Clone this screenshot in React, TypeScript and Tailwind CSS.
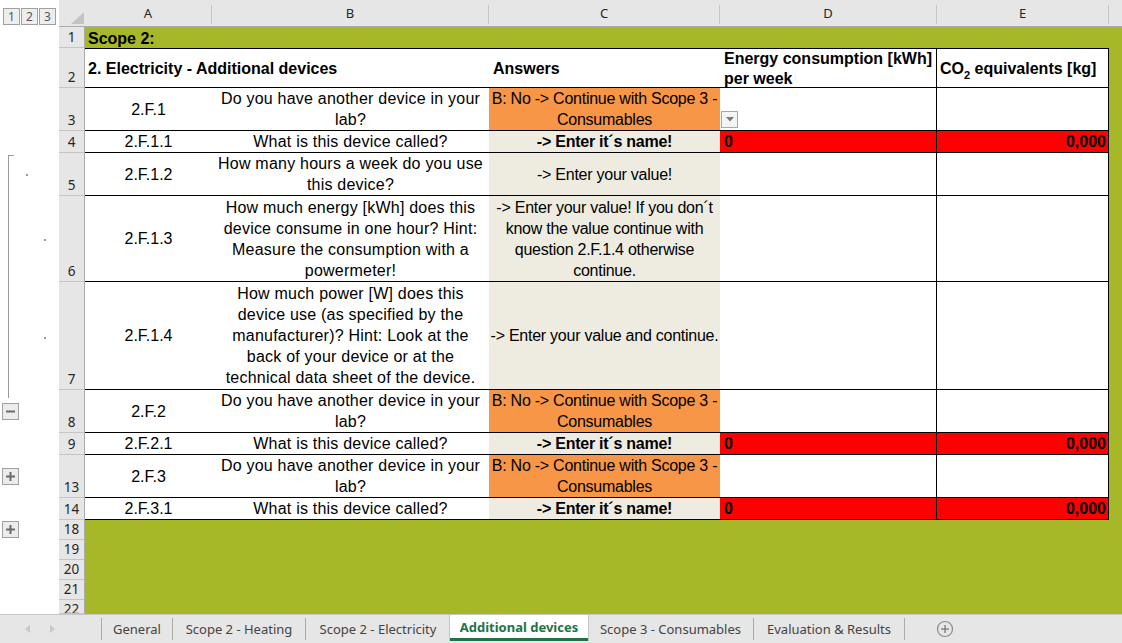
import React, { ReactNode } from 'react';

const GREEN = 'bg-[#a6b828]';

// outline gutter pieces (left of the row headers)
function OutlineBox({ sign }: { sign: '+' | '-' | string }) {
  return (
    <div className="w-[17px] h-[17px] border border-[#a0a0a0] bg-[#ececec] flex items-center justify-center">
      <svg width="9" height="9" viewBox="0 0 9 9">
        <rect x="0" y="3.5" width="9" height="2" fill="#6b6b6b" />
        {sign === '+' && <rect x="3.5" y="0" width="2" height="9" fill="#6b6b6b" />}
      </svg>
    </div>
  );
}

function Dot({ x, y }: { x: string; y: string }) {
  return <div className={`absolute w-[2px] h-[2px] bg-[#9a9a9a] ${x} ${y}`} />;
}

interface RowProps {
  n: string;
  h: string;
  gutter?: ReactNode;
  children: ReactNode;
  clipped?: boolean;
}

function Row({ n, h, gutter, children, clipped }: RowProps) {
  return (
    <div className={`flex shrink-0 ${h}`}>
      <div className="w-[59px] shrink-0 relative bg-white">{gutter}</div>
      <div
        className={`w-[26px] shrink-0 overflow-hidden bg-[#e6e6e6] border-r border-b border-r-[#ababab] border-b-[#c4c4c4] flex justify-center text-[13.5px] leading-[17px] text-[#262626] font-['Noto_Sans',sans-serif] ${
          clipped ? 'items-start pt-[1px]' : 'items-end pb-[1px]'
        }`}
      >
        {n}
      </div>
      {children}
    </div>
  );
}

// one data row of the table
interface DataProps {
  id: string;
  q: ReactNode;
  answer: ReactNode;
  kind: 'orange' | 'name' | 'value';
  dropdown?: boolean;
}

function DataCells({ id, q, answer, kind, dropdown }: DataProps) {
  const cFill = kind === 'orange' ? 'bg-[#f79646]' : 'bg-[#eeece1]';
  const red = kind === 'name';
  return (
    <>
      <div className="w-[127px] shrink-0 bg-white border-b border-black flex items-center justify-center">{id}</div>
      <div className="w-[277px] shrink-0 bg-white border-b border-black flex items-center justify-center text-center whitespace-nowrap tracking-[0.22px]">
        <div>{q}</div>
      </div>
      <div
        className={`w-[231px] shrink-0 ${cFill} border-b border-black flex items-center justify-center text-center whitespace-nowrap tracking-[-0.25px] ${
          red ? 'font-bold' : ''
        }`}
      >
        <div>{answer}</div>
      </div>
      <div className={`w-[217px] shrink-0 border-b border-r border-black flex ${red ? 'bg-[#ff0000] items-center pl-[4px] font-bold' : 'bg-white items-end'}`}>
        {red && '0'}
        {dropdown && (
          <div className="w-[17px] h-[17px] ml-[1px] mb-[2px] border border-[#a8a8a8] bg-[#f4f4f4] flex items-center justify-center">
            <svg width="8" height="5" viewBox="0 0 8 5">
              <polygon points="0,0 8,0 4,4.5" fill="#7a7a7a" />
            </svg>
          </div>
        )}
      </div>
      <div className={`w-[172px] shrink-0 border-b border-r border-black flex items-center justify-end pr-[2px] ${red ? 'bg-[#ff0000] font-bold' : 'bg-white'}`}>
        {red && '0,000'}
      </div>
      <div className={`flex-1 ${GREEN}`} />
    </>
  );
}

const noDevice = (
  <>
    B: No -&gt; Continue with Scope 3 -<br />
    Consumables
  </>
);

const columns = [
  { l: 'A', w: 'w-[127px]' },
  { l: 'B', w: 'w-[277px]' },
  { l: 'C', w: 'w-[231px]' },
  { l: 'D', w: 'w-[217px]' },
  { l: 'E', w: 'w-[172px]' },
];

const Sep = () => <div className="w-px h-[22px] mt-[3px] shrink-0 bg-[#ababab]" />;

export default function App() {
  return (
    <div className="w-[1122px] h-[643px] flex flex-col overflow-hidden bg-white text-black text-[16px] leading-[21px] font-['Liberation_Sans',Arial,sans-serif]">
      {/* column header strip */}
      <div className="flex h-[27px] shrink-0">
        <div className="w-[59px] shrink-0 bg-white flex items-start pt-[8px] pl-[3px] gap-[1px] font-['Noto_Sans',sans-serif] text-[12px] text-[#555]">
          {['1', '2', '3'].map((l) => (
            <div key={l} className="w-[17px] h-[17px] border border-[#a0a0a0] bg-[#eeeeee] flex items-center justify-center leading-none">
              {l}
            </div>
          ))}
        </div>
        <div className="flex-1 flex bg-[#e6e6e6] border-b border-[#ababab] font-['Noto_Sans',sans-serif] text-[13px] text-[#262626]">
          <div className="w-[26px] shrink-0 flex items-end justify-end pb-[2px] pr-[1px]">
            <svg width="13" height="12" viewBox="0 0 13 12">
              <polygon points="13,0 13,12 0,12" fill="#c4c4c4" />
            </svg>
          </div>
          {columns.map((c) => (
            <div key={c.l} className={`${c.w} shrink-0 flex items-end justify-center pb-[2px]`}>
              <div className="flex-1 text-center">{c.l}</div>
              <div className="w-px h-[19px] bg-[#c6c6c6]" />
            </div>
          ))}
          <div className="flex-1" />
        </div>
      </div>

      {/* row 1 */}
      <Row n="1" h="h-[21px]">
        <div className={`flex-1 ${GREEN} font-bold pl-[3px] pt-[1px] flex items-center`}>Scope 2:</div>
      </Row>

      {/* row 2: table header */}
      <Row n="2" h="h-[40px]">
        <div className="w-[404px] shrink-0 bg-white border-y border-black font-bold pl-[3px] pt-[1px] flex items-center">
          2. Electricity - Additional devices
        </div>
        <div className="w-[231px] shrink-0 bg-white border-y border-black font-bold pl-[4px] pt-[1px] flex items-center">Answers</div>
        <div className="w-[217px] shrink-0 bg-white border-y border-r border-black font-bold pl-[4px] pt-[1px] leading-[20px] flex items-center">
          <div>
            Energy consumption [kWh]
            <br />
            per week
          </div>
        </div>
        <div className="w-[172px] shrink-0 bg-white border-y border-r border-black font-bold pl-[3px] flex items-center whitespace-nowrap">
          <span>
            CO<sub className="text-[11px] leading-none align-[-3px]">2</sub> equivalents [kg]
          </span>
        </div>
        <div className={`flex-1 ${GREEN}`} />
      </Row>

      <Row n="3" h="h-[43px]">
        <DataCells id="2.F.1" q={<>Do you have another device in your<br />lab?</>} answer={noDevice} kind="orange" dropdown />
      </Row>

      <Row n="4" h="h-[22px]">
        <DataCells id="2.F.1.1" q="What is this device called?" answer="-> Enter it´s name!" kind="name" />
      </Row>

      <Row
        n="5"
        h="h-[43px]"
        gutter={
          <>
            <div className="absolute left-[8px] top-[2px] w-[6px] h-[41px] border-l border-t border-[#9a9a9a]" />
            <Dot x="left-[26px]" y="top-[21px]" />
          </>
        }
      >
        <DataCells id="2.F.1.2" q={<>How many hours a week do you use<br />this device?</>} answer="-> Enter your value!" kind="value" />
      </Row>

      <Row
        n="6"
        h="h-[86px]"
        gutter={
          <>
            <div className="absolute left-[8px] top-0 h-full w-px bg-[#9a9a9a]" />
            <Dot x="left-[44px]" y="top-[43px]" />
          </>
        }
      >
        <DataCells
          id="2.F.1.3"
          q={<>How much energy [kWh] does this<br />device consume in one hour? Hint:<br />Measure the consumption with a<br />powermeter!</>}
          answer={<>-&gt; Enter your value! If you don´t<br />know the value continue with<br />question 2.F.1.4 otherwise<br />continue.</>}
          kind="value"
        />
      </Row>

      <Row
        n="7"
        h="h-[108px]"
        gutter={
          <>
            <div className="absolute left-[8px] top-0 h-full w-px bg-[#9a9a9a]" />
            <Dot x="left-[44px]" y="top-[55px]" />
          </>
        }
      >
        <DataCells
          id="2.F.1.4"
          q={<>How much power [W] does this<br />device use (as specified by the<br />manufacturer)? Hint: Look at the<br />back of your device or at the<br />technical data sheet of the device.</>}
          answer="-> Enter your value and continue."
          kind="value"
        />
      </Row>

      <Row
        n="8"
        h="h-[43px]"
        gutter={
          <>
            <div className="absolute left-[8px] top-0 h-[8px] w-px bg-[#9a9a9a]" />
            <div className="absolute left-[2px] top-[13px]">
              <OutlineBox sign="-" />
            </div>
          </>
        }
      >
        <DataCells id="2.F.2" q={<>Do you have another device in your<br />lab?</>} answer={noDevice} kind="orange" />
      </Row>

      <Row n="9" h="h-[22px]">
        <DataCells id="2.F.2.1" q="What is this device called?" answer="-> Enter it´s name!" kind="name" />
      </Row>

      <Row
        n="13"
        h="h-[43px]"
        gutter={
          <div className="absolute left-[2px] top-[13px]">
            <OutlineBox sign="+" />
          </div>
        }
      >
        <DataCells id="2.F.3" q={<>Do you have another device in your<br />lab?</>} answer={noDevice} kind="orange" />
      </Row>

      <Row n="14" h="h-[22px]">
        <DataCells id="2.F.3.1" q="What is this device called?" answer="-> Enter it´s name!" kind="name" />
      </Row>

      <Row
        n="18"
        h="h-[20px]"
        gutter={
          <div className="absolute left-[2px] top-[1px]">
            <OutlineBox sign="+" />
          </div>
        }
      >
        <div className={`flex-1 ${GREEN}`} />
      </Row>
      {['19', '20', '21'].map((n) => (
        <Row key={n} n={n} h="h-[20px]">
          <div className={`flex-1 ${GREEN}`} />
        </Row>
      ))}
      <Row n="22" h="h-[14px]" clipped>
        <div className={`flex-1 ${GREEN}`} />
      </Row>

      {/* sheet tabs */}
      <div className="flex h-[29px] shrink-0 bg-[#e6e6e6] border-t border-[#c6c6c6] font-['Noto_Sans',sans-serif] text-[13px] text-[#444] whitespace-nowrap">
        <div className="w-[101px] shrink-0 flex items-center pl-[25px] gap-[20px]">
          <svg width="5" height="8" viewBox="0 0 5 8">
            <polygon points="5,0 5,8 0,4" fill="#c8c8c8" />
          </svg>
          <svg width="5" height="8" viewBox="0 0 5 8">
            <polygon points="0,0 0,8 5,4" fill="#c8c8c8" />
          </svg>
        </div>
        <Sep />
        <div className="w-[70px] shrink-0 flex items-center justify-center">General</div>
        <Sep />
        <div className="w-[132px] shrink-0 flex items-center justify-center">Scope 2 - Heating</div>
        <Sep />
        <div className="w-[144px] shrink-0 flex items-center justify-center">Scope 2 - Electricity</div>
        <div className="w-[138px] shrink-0 h-[26px] bg-white border-b-[3px] border-[#217346] flex items-center justify-center pt-[2px] font-bold text-[#217346] shadow-[1px_0_0_#c6c6c6,-1px_0_0_#c6c6c6]">
          Additional devices
        </div>
        <div className="w-[165px] shrink-0 flex items-center justify-center">Scope 3 - Consumables</div>
        <Sep />
        <div className="w-[150px] shrink-0 flex items-center justify-center">Evaluation &amp; Results</div>
        <Sep />
        <div className="flex items-center pl-[31px]">
          <svg width="18" height="18" viewBox="0 0 18 18">
            <circle cx="9" cy="9" r="7.5" fill="none" stroke="#8a8a8a" strokeWidth="1.2" />
            <rect x="5" y="8.4" width="8" height="1.3" fill="#7a7a7a" />
            <rect x="8.4" y="5" width="1.3" height="8" fill="#7a7a7a" />
          </svg>
        </div>
      </div>
    </div>
  );
}
